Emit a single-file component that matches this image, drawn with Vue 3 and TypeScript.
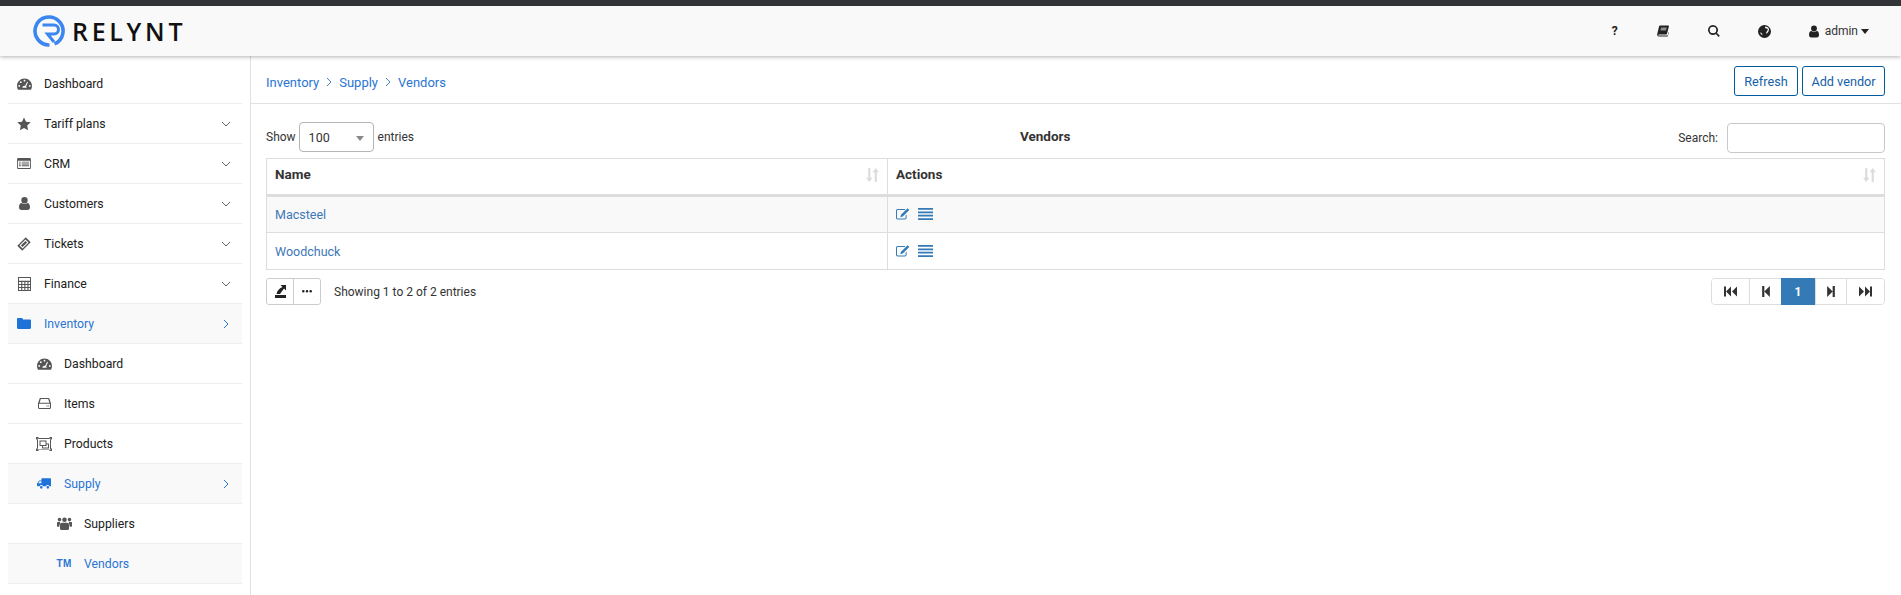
<script setup lang="ts">
interface Item { label: string; icon: string; level: number; chevron?: 'down' | 'right'; active?: boolean }

const icons: Record<string, { vb: string; d: string }> = {
  tach: { vb: '0 0 16 12', d: 'M8 0C3.6 0 0 3.6 0 8c0 1.5.4 2.9 1.1 4h13.8c.7-1.1 1.1-2.5 1.1-4 0-4.4-3.6-8-8-8zM8 1.4a1 1 0 1 1 0 2 1 1 0 0 1 0-2zM4 3a1 1 0 1 1 0 2 1 1 0 0 1 0-2zM2.4 7a1 1 0 1 1 0 2 1 1 0 0 1 0-2zM13.6 7a1 1 0 1 1 0 2 1 1 0 0 1 0-2zM10.8 3.6l.9.4-2 4.7c.4.4.6.8.6 1.3H5.7c0-1.2 1-2.2 2.3-2.2h.7z' },
  star: { vb: '0 0 14 14', d: 'M7 .4l2 4.3 4.7.6-3.5 3.2.9 4.7L7 10.9l-4.1 2.3.9-4.7L.3 5.300 5 4.700z' },
  list: { vb: '0 0 15 12', d: 'M1 0h13a1 1 0 0 1 1 1v10a1 1 0 0 1-1 1H1a1 1 0 0 1-1-1V1a1 1 0 0 1 1-1zM1 3v8h13V3zM2 4h2v1H2zM5 4h8v1H5zM2 6h2v1H2zM5 6h8v1H5zM2 8h2v1H2zM5 8h8v1H5z' },
  user: { vb: '0 0 11 13', d: 'M5.500 0a3.200 3.200 0 0 1 3.200 3.300 3.200 3.200 0 0 1-6.400 0A3.200 3.200 0 0 1 5.500 0zM2.600 6c.8.7 1.800 1.100 2.900 1.100S7.600 6.700 8.400 6C10 6.100 11 7.600 11 10.300c0 1.700-1 2.700-2.400 2.700H2.400C1 13 0 12 0 10.300 0 7.600 1 6.100 2.600 6z' },
  users: { vb: '0 0 15 13', d: 'M2.500.8a1.800 1.800 0 1 1 0 3.600 1.800 1.800 0 0 1 0-3.600zM12.500.8a1.800 1.800 0 1 1 0 3.600 1.800 1.800 0 0 1 0-3.600zM7.500.5a2.300 2.300 0 1 1 0 4.600 2.300 2.300 0 0 1 0-4.600zM.8 5h2.200l.4 1.500c-.6.5-1 1.300-1.100 3.200H.8C.3 9.700 0 9.400 0 8.900V5.800C0 5.300.3 5 .8 5zM12 5h2.200c.5 0 .8.300.8.800v3.100c0 .5-.3.800-.8.800h-1.500c-.1-1.900-.5-2.700-1.100-3.200zM5 5.800h5c1.200 0 2 .9 2 2.500v3.200c0 .9-.6 1.500-1.400 1.500H4.400C3.600 13 3 12.400 3 11.500V8.300C3 6.700 3.800 5.800 5 5.800z' },
  ticket: { vb: '0 0 14 14', d: 'M8.770.29L13.710 5.230 5.230 13.710.29 8.770zM8.410 2.470L2.470 8.410 5.590 11.530 11.530 5.590zM8.410 3.890L10.110 5.590 5.590 10.110 3.890 8.410z' },
  calc: { vb: '0 0 13 14', d: 'M0 0h13v14H0zM1 1v2.800h11V1zM1 5v2h2.200V5zM4.300 5v2h2V5zM7.400 5v2h2V5zM10.500 5v2H12V5zM1 8v2h2.200V8zM4.300 8v2h2V8zM7.400 8v2h2V8zM10.500 8v2H12V8zM1 11v2h2.200v-2zM4.300 11v2h2v-2zM7.400 11v2h2v-2zM10.500 11v2H12v-2z' },
  folder: { vb: '0 0 14 11', d: 'M1.200 0h3.400c.7 0 1.200.5 1.200 1.200v.3h7c.7 0 1.200.5 1.200 1.200v7.100c0 .7-.5 1.200-1.200 1.200H1.200C.5 11 0 10.500 0 9.800V1.200C0 .5.500 0 1.200 0z' },
  hdd: { vb: '0 0 13 11', d: 'M2.500 0h8c.4 0 .7.200.9.600L13 5.500V9.500c0 .8-.6 1.500-1.500 1.500h-10C.6 11 0 10.300 0 9.500V5.500L1.600.6C1.800.2 2.100 0 2.500 0zM2.800 1L1.600 4.800c0 0 .1 0 .2 0h9.400c.1 0 .2 0 .2 0L10.200 1zM1.500 5.800c-.3 0-.5.200-.5.500v3.200c0 .3.200.5.500.5h10c.3 0 .5-.2.500-.5V6.300c0-.3-.2-.5-.5-.5zM8.500 7.500h1v1h-1zM10.300 7.500h1v1h-1z' },
  ungroup: { vb: '0 0 16 14', d: 'M0 0h2.500v1H13.500V0H16v2.500h-1v9h1V14h-2.500v-1H2.500v1H0v-2.500h1v-9H0zM2.500 2V1.500H1.500V2.500H2v9H1.500v1h1V12.500h11v.5h1v-1H14V2.500h.5V1.500h-1V2zM3.500 3.500h7v3h2.500v5H6V9H3.500zM4.500 4.500V8h5V4.500zM10.500 7.500V9H7v1.500h5V7.500z' },
  truck: { vb: '0 0 15 11', d: 'M5.500 0h8.700c.4 0 .8.400.8.800v7.700h-1.700a2 2 0 0 0-3.800 0H6.500a2 2 0 0 0-3.800 0H1c-.6 0-1-.4-1-1V5.400L2 2.700C2.300 2.300 2.700 2.200 3 2.200h1.700V.8c0-.4.400-.8.800-.8zM2.900 3.200L1.200 5.300h3.500V3.200zM4.600 8.200a1.400 1.400 0 1 1 0 2.800 1.400 1.400 0 0 1 0-2.800zM11.600 8.200a1.400 1.400 0 1 1 0 2.800 1.400 1.400 0 0 1 0-2.800z' },
  book: { vb: '0 0 12 11', d: 'M3 0h8.300c.5 0 .7.400.6.900L10 8.300c-.1.500-.4.700-.9.700H1.900c-.6 0-.8.300-.7.700.1.300.4.400.8.400h8.700l1-3.700.3.600-1.200 3.400c-.1.400-.4.600-.8.600H1.800C.8 11 0 10.100.1 9.100L2.100.8C2.200.3 2.500 0 3 0zM4 2.300v.8h5.500l.2-.8zM3.500 4v.8H9l.2-.8z' },
  search: { vb: '0 0 12 12', d: 'M5 0a5 5 0 0 1 4 8l2.800 2.700-1.200 1.200L7.900 9.100A5 5 0 1 1 5 0zM5 1.700a3.300 3.300 0 1 0 0 6.600 3.300 3.300 0 0 0 0-6.600z' },
  globe: { vb: '0 0 12 12', d: 'M6 0a6 6 0 1 1 0 12A6 6 0 0 1 6 0zM6.800 1.300C6.200 1.800 6.400 2.700 7 3c.7.400 1.700.1 2 .9.200.7-.4 1.400-.9 2-.5.700-.8 1.400-.4 2.100.6-.2 1.300-.8 1.800-1.700.6-1.100.8-2.300.3-3.300C9.300 2 8 1.400 6.800 1.300zM2.400 6.600c-.3.300-.2.900.1 1.500.4.700 1.100 1.200 1.700 1.300-.1-.7-.4-1.300-.8-1.800-.3-.5-.6-.9-1-1z' },
  edit: { vb: '0 0 14 12', d: 'M1.700 1h7.300v1H1.700c-.4 0-.7.300-.7.700v7.100c0 .4.300.7.700.7h7.200c.4 0 .7-.3.700-.7V7.500l1-1v3.300c0 1-.8 1.700-1.700 1.700H1.700C.8 11.500 0 10.800 0 9.800V2.700C0 1.800.8 1 1.700 1zM11.500.2l1.800 1.800-6.500 6.500-2.500.7.700-2.500z' },
  lines: { vb: '0 0 15 12', d: 'M0 0h15v1.800H0zM0 3.400h15v1.800H0zM0 6.800h15v1.800H0zM0 10.200h15V12H0z' },
  exportIcon: { vb: '0 0 11 13', d: 'M5.500 0H11v5.500L9 3.500 5 9H1.500C2 6 4 3.500 7.500 2zM0 10h11v3H0z' },
  dots: { vb: '0 0 10 3', d: 'M1.300 0a1.300 1.300 0 1 1 0 2.600 1.300 1.300 0 0 1 0-2.600zM5 0a1.300 1.300 0 1 1 0 2.600A1.300 1.300 0 0 1 5 0zM8.700 0a1.300 1.300 0 1 1 0 2.600 1.300 1.300 0 0 1 0-2.600z' },
  first: { vb: '0 0 13 10', d: 'M0 0h2v10H0zM7 0v10L2 5zM13 0v10L8 5z' },
  prev: { vb: '0 0 7 10', d: 'M0 0h2v10H0zM7 0v10L2 5z' },
  next: { vb: '0 0 7 10', d: 'M0 0v10l5-5zM5 0h2v10H5z' },
  last: { vb: '0 0 13 10', d: 'M0 0v10l5-5zM6 0v10l5-5zM11 0h2v10h-2z' },
  sort: { vb: '0 0 12 13', d: 'M2 0h2v9h2l-3 4-3-4h2zM9 0l3 4h-2v9H8V4H6z' }
};

const items: Item[] = [
  { label: 'Dashboard', icon: 'tach', level: 0 },
  { label: 'Tariff plans', icon: 'star', level: 0, chevron: 'down' },
  { label: 'CRM', icon: 'list', level: 0, chevron: 'down' },
  { label: 'Customers', icon: 'user', level: 0, chevron: 'down' },
  { label: 'Tickets', icon: 'ticket', level: 0, chevron: 'down' },
  { label: 'Finance', icon: 'calc', level: 0, chevron: 'down' },
  { label: 'Inventory', icon: 'folder', level: 0, chevron: 'right', active: true },
  { label: 'Dashboard', icon: 'tach', level: 1 },
  { label: 'Items', icon: 'hdd', level: 1 },
  { label: 'Products', icon: 'ungroup', level: 1 },
  { label: 'Supply', icon: 'truck', level: 1, chevron: 'right', active: true },
  { label: 'Suppliers', icon: 'users', level: 2 },
  { label: 'Vendors', icon: 'tm', level: 2, active: true }
];

const vendors: string[] = ['Macsteel', 'Woodchuck'];
const pager = [
  { icon: 'first', w: 'w38' },
  { icon: 'prev', w: 'w32' },
  { icon: '', w: 'w34' },
  { icon: 'next', w: 'w31' },
  { icon: 'last', w: 'w39' }
];
</script>

<template>
  <div class="page">
    <header class="topbar">
      <div class="brand">
        <svg class="logo" viewBox="0 0 32 32">
          <path d="M21.500 28.900A14 14 0 1 0 16.500 30" />
          <path class="logo-r" d="M9.500 10H21a4.500 4.500 0 0 1 0 9H14.500L21 27" />
        </svg>
        <span class="wordmark">RELYNT</span>
      </div>
      <nav class="top-tools">
        <span class="help">?</span>
        <svg class="tool book" :viewBox="icons.book.vb"><path :d="icons.book.d" fill-rule="evenodd" /></svg>
        <svg class="tool search" :viewBox="icons.search.vb"><path :d="icons.search.d" fill-rule="evenodd" /></svg>
        <svg class="tool globe" :viewBox="icons.globe.vb"><path :d="icons.globe.d" fill-rule="evenodd" /></svg>
        <span class="account">
          <svg class="account-icon" :viewBox="icons.user.vb"><path :d="icons.user.d" /></svg>
          admin
          <i class="caret"></i>
        </span>
      </nav>
    </header>

    <div class="body">
      <aside class="sidebar">
        <div
          v-for="(item, i) in items"
          :key="i"
          class="nav-row"
          :class="[`lvl${item.level}`, { active: item.active }]"
        >
          <span class="nav-icon">
            <span v-if="item.icon === 'tm'" class="tm">TM</span>
            <svg v-else :class="`ic-${item.icon}`" :viewBox="icons[item.icon].vb">
              <path :d="icons[item.icon].d" fill-rule="evenodd" />
            </svg>
          </span>
          <span class="nav-label">{{ item.label }}</span>
          <svg v-if="item.chevron" class="chev" viewBox="0 0 10 10">
            <path v-if="item.chevron === 'down'" d="M1 3l4 4 4-4" />
            <path v-else d="M3 1l4 4-4 4" />
          </svg>
        </div>
      </aside>

      <main class="content">
        <div class="crumbbar">
          <div class="crumbs">
            <a>Inventory</a>
            <svg class="crumb-sep" viewBox="0 0 6 10"><path d="M1 1l4 4-4 4" /></svg>
            <a>Supply</a>
            <svg class="crumb-sep" viewBox="0 0 6 10"><path d="M1 1l4 4-4 4" /></svg>
            <a>Vendors</a>
          </div>
          <div class="crumb-actions">
            <button class="btn-outline w-refresh">Refresh</button>
            <button class="btn-outline w-add">Add vendor</button>
          </div>
        </div>

        <section class="panel">
          <div class="controls">
            <div class="show">
              <span>Show</span>
              <div class="select">100<i class="select-caret"></i></div>
              <span>entries</span>
            </div>
            <div class="table-title">Vendors</div>
            <div class="search-wrap">
              <span>Search:</span>
              <div class="search-input"></div>
            </div>
          </div>

          <table class="grid">
            <thead>
              <tr>
                <th class="col-name">Name<svg class="sort" :viewBox="icons.sort.vb"><path :d="icons.sort.d" /></svg></th>
                <th>Actions<svg class="sort" :viewBox="icons.sort.vb"><path :d="icons.sort.d" /></svg></th>
              </tr>
            </thead>
            <tbody>
              <tr v-for="(v, i) in vendors" :key="v" :class="{ odd: i === 0 }">
                <td><a>{{ v }}</a></td>
                <td>
                  <div class="row-actions">
                    <svg class="a-edit" :viewBox="icons.edit.vb"><path :d="icons.edit.d" fill-rule="evenodd" /></svg>
                    <svg class="a-lines" :viewBox="icons.lines.vb"><path :d="icons.lines.d" /></svg>
                  </div>
                </td>
              </tr>
            </tbody>
          </table>

          <div class="footer">
            <div class="tools">
              <div class="tool-group">
                <button><svg class="f-export" :viewBox="icons.exportIcon.vb"><path :d="icons.exportIcon.d" /></svg></button>
                <button class="dots-btn"><svg class="f-dots" :viewBox="icons.dots.vb"><path :d="icons.dots.d" /></svg></button>
              </div>
              <span class="info">Showing 1 to 2 of 2 entries</span>
            </div>
            <div class="pager">
              <button v-for="(p, i) in pager" :key="i" :class="[p.w, { current: !p.icon }]">
                <svg v-if="p.icon" :class="`p-${p.icon}`" :viewBox="icons[p.icon].vb"><path :d="icons[p.icon].d" /></svg>
                <template v-else>1</template>
              </button>
            </div>
          </div>
        </section>
      </main>
    </div>
  </div>
</template>

<style>
html, body { margin: 0; background: #fff; }
</style>

<style scoped>
.page {
  width: 1901px;
  height: 595px;
  overflow: hidden;
  font-family: Roboto, "Liberation Sans", sans-serif;
  font-size: 12px;
  color: #333;
  border-top: 6px solid #333438;
  box-sizing: border-box;
  display: flex;
  flex-direction: column;
}
svg { fill: currentColor; display: block; }

.topbar {
  flex: none;
  height: 50px;
  background: #f9f9f9;
  box-shadow: 0 1px 4px rgba(0, 0, 0, .3);
  display: flex;
  align-items: center;
  justify-content: space-between;
  position: relative;
  z-index: 2;
}
.brand { display: flex; align-items: center; margin-left: 33px; }
.logo { width: 32px; height: 32px; fill: none; stroke: #3b86f0; stroke-width: 3.600; }
.logo-r { stroke-width: 3; }
.wordmark {
  font-family: "Open Sans", sans-serif;
  font-weight: 600;
  font-size: 25px;
  letter-spacing: 3.700px;
  color: #111;
  margin-left: 7px;
}
.top-tools { display: flex; align-items: center; color: #222; margin-right: 32px; }
.help { font-weight: 700; font-size: 12px; width: 8px; margin-right: 38px; text-align: center; }
.tool { height: 12px; }
.book { width: 12px; margin-right: 39px; }
.search { width: 12px; margin-right: 38px; }
.globe { width: 13px; height: 13px; margin-right: 38px; }
.account { display: flex; align-items: center; color: #333; }
.account-icon { width: 10px; height: 13px; margin-right: 6px; color: #222; }
.caret {
  margin-left: 3px;
  border-top: 5px solid #222;
  border-left: 4.500px solid transparent;
  border-right: 4.500px solid transparent;
}

.body { flex: 1; display: flex; min-height: 0; }
.sidebar {
  flex: none;
  width: 251px;
  box-sizing: border-box;
  padding: 8px 8px 0;
  border-right: 1px solid #e1e1e1;
}
.nav-row {
  height: 40px;
  box-sizing: border-box;
  border-bottom: 1px solid #eee;
  display: flex;
  align-items: center;
  color: #222;
  font-size: 12.250px;
}
.nav-row.active { color: #2a75d3; background: #f9f9f9; }
.nav-icon { width: 14px; display: flex; justify-content: center; color: #555; margin-right: 13px; flex: none; }
.active .nav-icon { color: #1f72d8; }
.lvl0 { padding-left: 9px; }
.lvl1 { padding-left: 29px; }
.lvl2 { padding-left: 49px; }
.nav-label { flex: 1; }
.chev { width: 10px; height: 10px; margin-right: 11px; stroke: #666; stroke-width: 1; fill: none; }
.active .chev { stroke: #2a75d3; }
.ic-tach { width: 15px; height: 12px; flex: none; }
.ic-star { width: 14px; height: 14px; flex: none; }
.ic-list { width: 14px; height: 11px; flex: none; }
.ic-user { width: 11px; height: 13px; flex: none; }
.ic-ticket { width: 14px; height: 14px; flex: none; }
.ic-calc { width: 13px; height: 14px; flex: none; }
.ic-folder { width: 14px; height: 11px; flex: none; }
.ic-hdd { width: 13px; height: 11px; flex: none; }
.ic-ungroup { width: 16px; height: 14px; flex: none; }
.ic-truck { width: 14px; height: 11px; flex: none; }
.ic-users { width: 15px; height: 13px; flex: none; }
.tm { font-family: "Liberation Sans", sans-serif; font-weight: 700; font-size: 10px; color: #2a75d3; letter-spacing: .3px; white-space: nowrap; }

.content { flex: 1; min-width: 0; }
.crumbbar {
  height: 48px;
  box-sizing: border-box;
  border-bottom: 1px solid #e1e1e1;
  padding: 10px 16px 0 15px;
  display: flex;
  align-items: flex-start;
  justify-content: space-between;
}
.crumbs { display: flex; align-items: center; color: #2a75d3; font-size: 13px; height: 32px; }
.crumb-sep { width: 6px; height: 10px; margin: 0 7px; stroke: #4a7fc0; stroke-width: 1; fill: none; }
.crumb-actions { display: flex; gap: 4px; }
.btn-outline {
  height: 30px;
  padding: 0;
  border: 1px solid #005a9e;
  border-radius: 3px;
  background: #fff;
  color: #1561a8;
  font: 12.700px Roboto, sans-serif;
}
.w-refresh { width: 64px; }
.w-add { width: 83px; }

.panel { padding: 18px 16px 0 15px; }
.controls { display: flex; align-items: center; height: 31px; justify-content: space-between; }
.show { display: flex; align-items: center; gap: 3px; margin-top: -1px; }
.select {
  width: 75px;
  height: 30px;
  box-sizing: border-box;
  border: 1px solid #b5b5b5;
  border-radius: 4px;
  padding: 2px 0 0 9px;
  line-height: 26px;
  font-size: 12.500px;
  position: relative;
  margin-right: 1px;
}
.select-caret {
  position: absolute;
  right: 9px;
  top: 13px;
  border-top: 5px solid #888;
  border-left: 4px solid transparent;
  border-right: 4px solid transparent;
}
.table-title { font-weight: 700; font-size: 13.500px; margin: 0 2px 4px 0; }
.search-wrap { display: flex; align-items: center; gap: 9px; }
.search-input { width: 158px; height: 30px; box-sizing: border-box; border: 1px solid #c8c8c8; border-radius: 4px; }

.grid {
  width: 1619px;
  margin-top: 5px;
  border-collapse: collapse;
  table-layout: fixed;
  border: 1px solid #ddd;
}
.grid th {
  height: 37px;
  box-sizing: border-box;
  text-align: left;
  padding: 0 8px 5px;
  font-size: 13.500px;
  font-weight: 700;
  border: 1px solid #ddd;
  border-bottom: 3px solid #ddd;
  position: relative;
}
.col-name { width: 621px; }
.grid td { height: 37px; box-sizing: border-box; padding: 0 8px; border: 1px solid #ddd; }
.grid td a { color: #3d78b8; font-size: 12.500px; }
.odd { background: #f9f9f9; }
.sort { position: absolute; right: 8px; top: 9px; width: 13px; height: 14px; color: #dcdcdc; }
.row-actions { display: flex; align-items: center; gap: 8px; color: #337ab7; margin-top: -1px; }
.a-edit { width: 14px; height: 12px; }
.a-lines { width: 15px; height: 12px; }

.footer { display: flex; justify-content: space-between; align-items: center; margin-top: 8px; }
.tools { display: flex; align-items: center; }
.tool-group { display: flex; border: 1px solid #ccc; border-radius: 3px; height: 27px; box-sizing: border-box; }
.tool-group button {
  width: 26px;
  padding: 0;
  border: 0;
  background: #fff;
  display: flex;
  align-items: center;
  justify-content: center;
  color: #222;
  border-radius: 3px;
}
.tool-group .dots-btn { width: 27px; border-left: 1px solid #ccc; border-radius: 0 3px 3px 0; }
.f-export { width: 11px; height: 13px; }
.f-dots { width: 10px; height: 3px; }
.info { margin-left: 13px; }
.pager { display: flex; height: 27px; border: 1px solid #ddd; border-radius: 4px; box-sizing: border-box; }
.pager button {
  padding: 0;
  border: 0;
  border-left: 1px solid #ddd;
  background: #fff;
  display: flex;
  align-items: center;
  justify-content: center;
  color: #333;
  border-radius: 0;
  font: 700 12px Roboto, sans-serif;
}
.pager button:first-child { border-left: 0; border-radius: 3px 0 0 3px; }
.pager button:last-child { border-radius: 0 3px 3px 0; }
.pager .current { background: #337ab7; color: #fff; border-left: 0; margin: -1px 0; }
.w38 { width: 37px; }
.w32 { width: 32px; }
.w34 { width: 34px; }
.w31 { width: 31px; }
.w39 { width: 38px; }
.p-first, .p-last { width: 13px; height: 11px; }
.p-prev, .p-next { width: 8px; height: 11px; }
</style>
